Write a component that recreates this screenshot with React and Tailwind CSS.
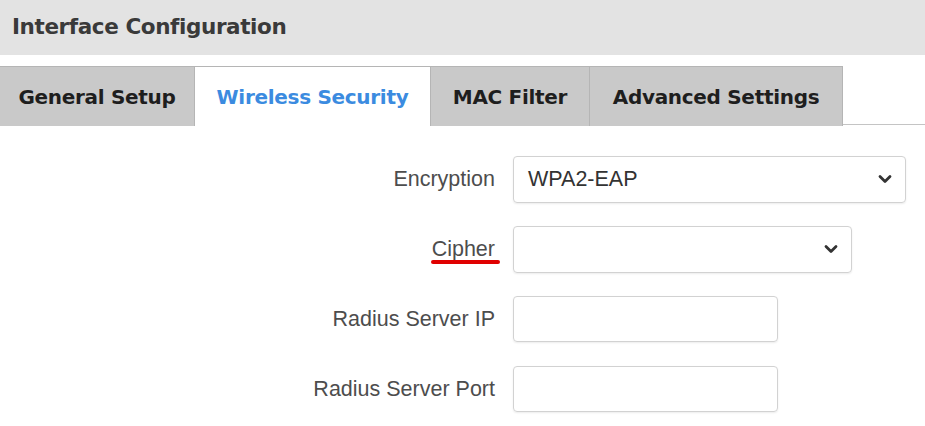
const tabs = [
  { name: "General Setup", w: "w-[195px]" },
  { name: "Wireless Security", w: "w-[236px]", active: true },
  { name: "MAC Filter", w: "w-[159px]" },
  { name: "Advanced Settings", w: "w-[253px]" },
];

const Chevron = () => (
  <svg width="16" height="12" viewBox="0 0 16 12" fill="none">
    <path d="M3 3.5L8 8.5L13 3.5" stroke="#333" strokeWidth="2.8" strokeLinecap="round" strokeLinejoin="round" />
  </svg>
);

const Row = ({ label, children, underline }) => (
  <div className="flex items-center h-[46px]">
    <div className="w-[496px] flex justify-end pr-[1px]">
      <span className="relative text-[21.5px] text-[#4d4d4d]">
        {label}
        {underline && (
          <span className="absolute left-[-1px] right-[-5px] top-[27px] h-[4px] rounded-full bg-[#e00000]" />
        )}
      </span>
    </div>
    <div className="ml-[17px]">{children}</div>
  </div>
);

export default function App() {
  return (
    <div className="w-[925px] h-[426px] bg-white overflow-hidden font-['Liberation_Sans',Arial,sans-serif]">
      <div className="h-[55px] bg-[#e3e3e3] flex items-center pl-[12px]">
        <h1 className="font-['DejaVu_Sans',Verdana,sans-serif] font-bold text-[21.5px] text-[#3a3a3a] tracking-[-0.4px]">
          Interface Configuration
        </h1>
      </div>

      <div className="mt-[11px] flex h-[59px] border-b border-[#c4c4c4]">
        {tabs.map((t) => (
          <div
            key={t.name}
            className={`${t.w} h-[60px] flex items-center justify-center font-['DejaVu_Sans',Verdana,sans-serif] font-bold text-[20px] tracking-[-0.3px] border-t border-r border-[#b5b5b5] ${
              t.active ? "bg-white text-[#3b8be0] border-l-0" : "bg-[#c9c9c9] text-[#1e1e1e]"
            }`}
          >
            {t.name}
          </div>
        ))}
      </div>

      <div className="mt-[31px] flex flex-col gap-[24px]">
        <Row label="Encryption">
          <div className="w-[393px] h-[47px] rounded-[4px] border border-[#d2d2d2] shadow-[0_1px_2px_rgba(0,0,0,0.08)] flex items-center justify-between pl-[14px] pr-[12px]">
            <span className="text-[21.5px] text-[#333]">WPA2-EAP</span>
            <Chevron />
          </div>
        </Row>
        <Row label="Cipher" underline>
          <div className="w-[339px] h-[47px] rounded-[4px] border border-[#d2d2d2] shadow-[0_1px_2px_rgba(0,0,0,0.08)] flex items-center justify-end pr-[12px]">
            <Chevron />
          </div>
        </Row>
        <Row label="Radius Server IP">
          <div className="w-[265px] h-[46px] rounded-[4px] border border-[#d2d2d2] shadow-[0_1px_2px_rgba(0,0,0,0.08)]" />
        </Row>
        <Row label="Radius Server Port">
          <div className="w-[265px] h-[46px] rounded-[4px] border border-[#d2d2d2] shadow-[0_1px_2px_rgba(0,0,0,0.08)]" />
        </Row>
      </div>
    </div>
  );
}
